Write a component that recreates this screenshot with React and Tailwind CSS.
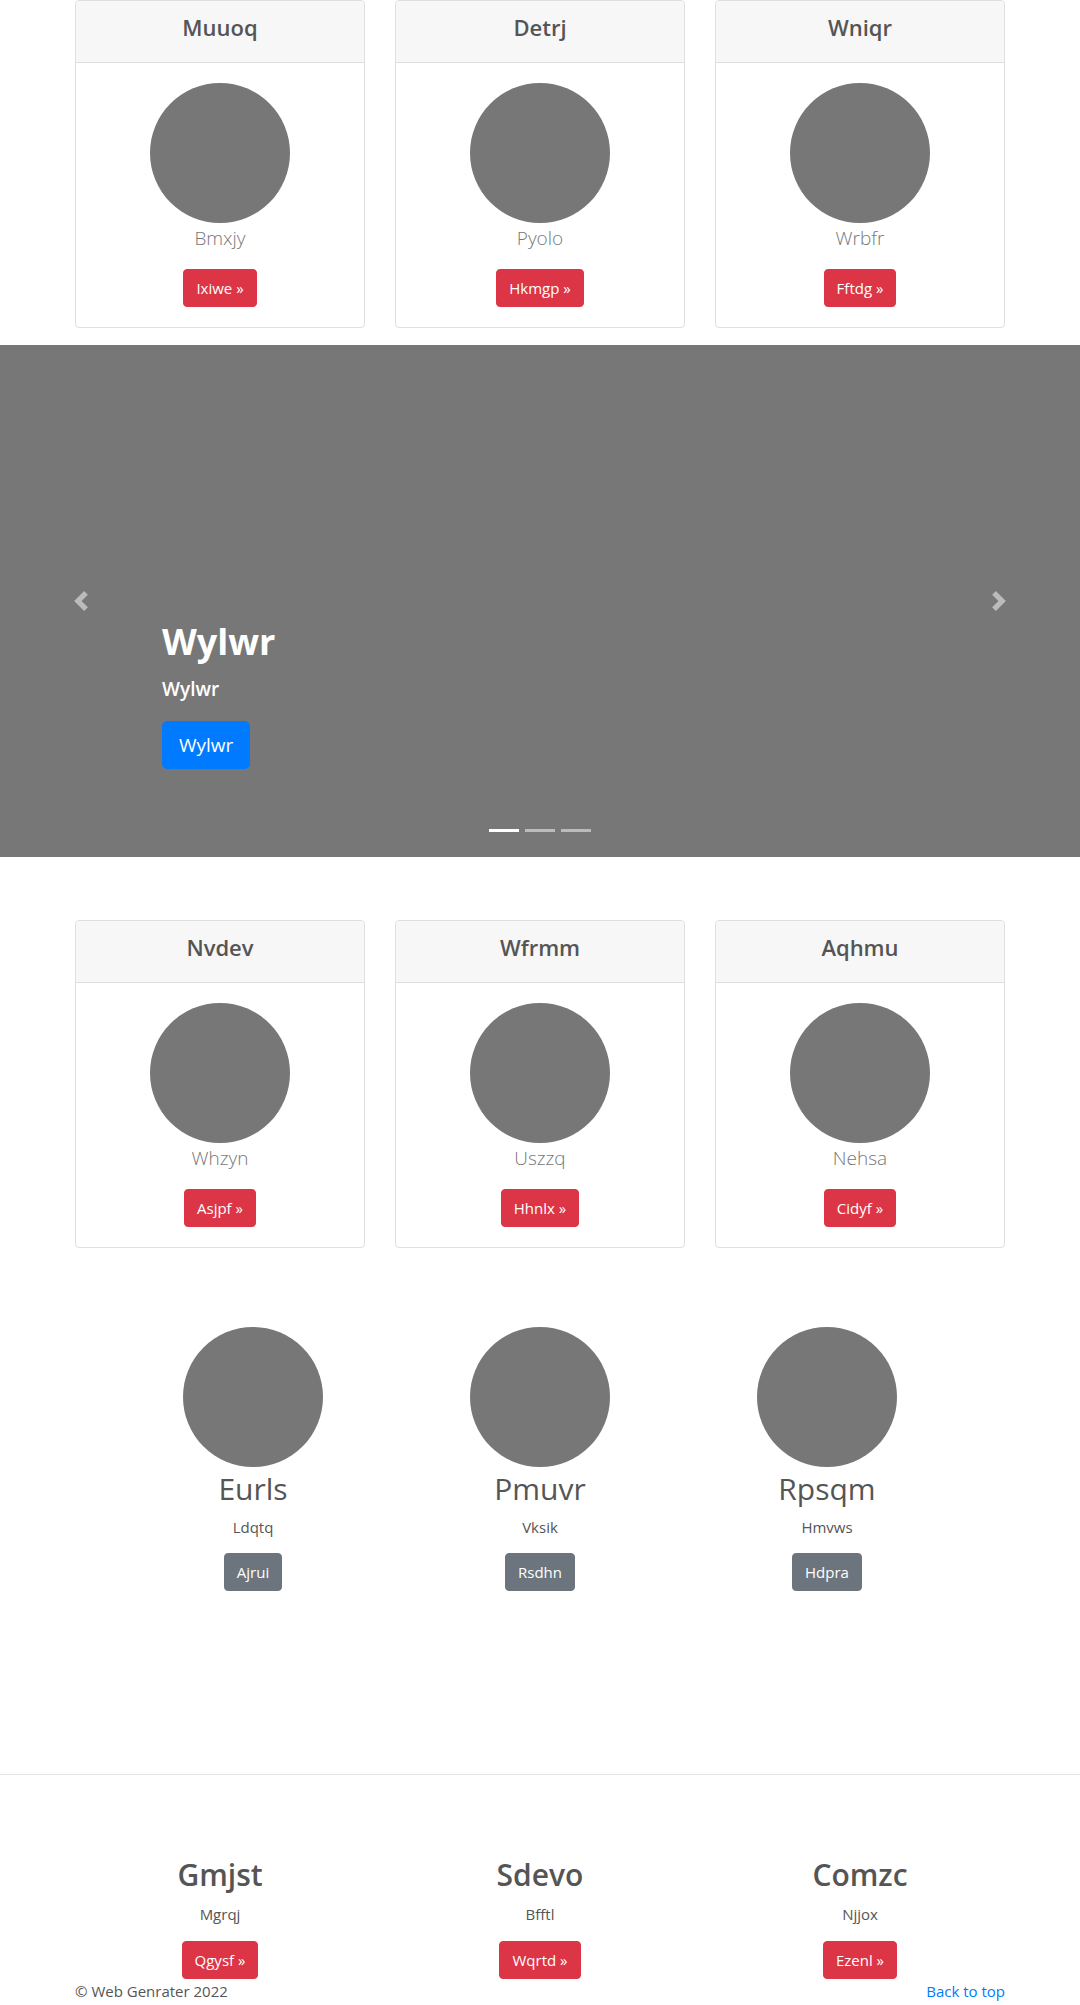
const topCards = [
  { title: 'Muuoq', lead: 'Bmxjy', btn: 'Ixiwe' },
  { title: 'Detrj', lead: 'Pyolo', btn: 'Hkmgp' },
  { title: 'Wniqr', lead: 'Wrbfr', btn: 'Fftdg' },
];

const midCards = [
  { title: 'Nvdev', lead: 'Whzyn', btn: 'Asjpf' },
  { title: 'Wfrmm', lead: 'Uszzq', btn: 'Hhnlx' },
  { title: 'Aqhmu', lead: 'Nehsa', btn: 'Cidyf' },
];

const people = [
  { name: 'Eurls', sub: 'Ldqtq', btn: 'Ajrui' },
  { name: 'Pmuvr', sub: 'Vksik', btn: 'Rsdhn' },
  { name: 'Rpsqm', sub: 'Hmvws', btn: 'Hdpra' },
];

const features = [
  { name: 'Gmjst', sub: 'Mgrqj', btn: 'Qgysf' },
  { name: 'Sdevo', sub: 'Bfftl', btn: 'Wqrtd' },
  { name: 'Comzc', sub: 'Njjox', btn: 'Ezenl' },
];

function Card({ title, lead, btn }) {
  return (
    <div className="border border-[#dfdfdf] rounded-[4px] bg-white">
      {/* header */}
      <div className="bg-[#f7f7f7] border-b border-[#dfdfdf] px-5 py-3 rounded-t-[4px]">
        <h4 className="text-center text-[22px] leading-[29px] font-semibold text-[#555] mb-2">{title}</h4>
      </div>
      {/* body */}
      <div className="p-5 flex flex-col items-center">
        <div className="w-[140px] h-[140px] rounded-full bg-[#777]" />
        <p className="text-[19px] leading-[30px] font-light text-[#777] mb-4">{lead}</p>
        <a className="inline-block bg-[#dc3545] border border-[#dc3545] text-white text-[15px] leading-6 px-3 py-[6px] rounded-[4px]">
          {btn} »
        </a>
      </div>
    </div>
  );
}

function CardRow({ items }) {
  return (
    <div className="max-w-[960px] mx-auto px-[15px] grid grid-cols-3 gap-[30px]">
      {items.map((c) => (
        <Card key={c.title} {...c} />
      ))}
    </div>
  );
}

function Carousel() {
  return (
    <div className="relative h-[512px] bg-[#777] mb-[63px]">
      {/* caption */}
      <div className="absolute left-[15%] right-[15%] bottom-[88px] text-white">
        <h1 className="text-[36px] leading-[48px] font-bold mb-2">Wylwr</h1>
        <p className="text-[19px] leading-[30px] font-semibold mb-[17px]">Wylwr</p>
        <a className="inline-block bg-[#007bff] border border-[#007bff] text-white text-[19px] leading-[30px] px-4 py-2 rounded-[5px]">
          Wylwr
        </a>
      </div>

      {/* controls */}
      <div className="absolute left-0 top-0 bottom-0 w-[15%] flex items-center justify-center">
        <svg viewBox="0 0 8 8" className="w-5 h-5 opacity-50" fill="#fff">
          <path d="M5.25 0l-4 4 4 4 1.5-1.5L4.25 4l2.5-2.5L5.25 0z" />
        </svg>
      </div>
      <div className="absolute right-0 top-0 bottom-0 w-[15%] flex items-center justify-center">
        <svg viewBox="0 0 8 8" className="w-5 h-5 opacity-50" fill="#fff">
          <path d="M2.75 0l-1.5 1.5L3.75 4l-2.5 2.5L2.75 8l4-4-4-4z" />
        </svg>
      </div>

      {/* indicators */}
      <div className="absolute left-0 right-0 bottom-[25px] flex justify-center gap-[6px]">
        <span className="w-[30px] h-[3px] bg-white" />
        <span className="w-[30px] h-[3px] bg-white/50" />
        <span className="w-[30px] h-[3px] bg-white/50" />
      </div>
    </div>
  );
}

export default function App() {
  return (
    <div className="font-['Open_Sans',sans-serif] text-[#555] bg-white">
      <div className="mb-[17px]">
        <CardRow items={topCards} />
      </div>

      <Carousel />

      <CardRow items={midCards} />

      {/* people */}
      <div className="max-w-[861px] mx-auto grid grid-cols-3 mt-[79px] mb-[183px]">
        {people.map((p) => (
          <div key={p.name} className="flex flex-col items-center">
            <div className="w-[140px] h-[140px] rounded-full bg-[#777]" />
            <h2 className="text-[30px] leading-[38px] font-normal text-[#555] mt-[3px] mb-[7px]">{p.name}</h2>
            <p className="text-[15px] leading-6 text-[#555] mb-[14px]">{p.sub}</p>
            <a className="inline-block bg-[#6c757d] border border-[#6c757d] text-white text-[15px] leading-6 px-3 py-[6px] rounded-[4px]">
              {p.btn}
            </a>
          </div>
        ))}
      </div>

      <hr className="border-0 border-t border-[#e5e5e5]" />

      {/* features */}
      <div className="max-w-[960px] mx-auto px-[15px] grid grid-cols-3 gap-[30px] pt-[81px]">
        {features.map((f) => (
          <div key={f.name} className="flex flex-col items-center">
            <h2 className="text-[30px] leading-[38px] font-semibold text-[#555] mb-2">{f.name}</h2>
            <p className="text-[15px] leading-6 text-[#555] mb-[15px]">{f.sub}</p>
            <a className="inline-block bg-[#dc3545] border border-[#dc3545] text-white text-[15px] leading-6 px-3 py-[6px] rounded-[4px]">
              {f.btn} »
            </a>
          </div>
        ))}
      </div>

      {/* footer */}
      <footer className="max-w-[960px] mx-auto px-[15px] flex justify-between text-[15px] leading-6 text-[#555]">
        <p>© Web Genrater 2022</p>
        <a className="text-[#007bff]">Back to top</a>
      </footer>
    </div>
  );
}
